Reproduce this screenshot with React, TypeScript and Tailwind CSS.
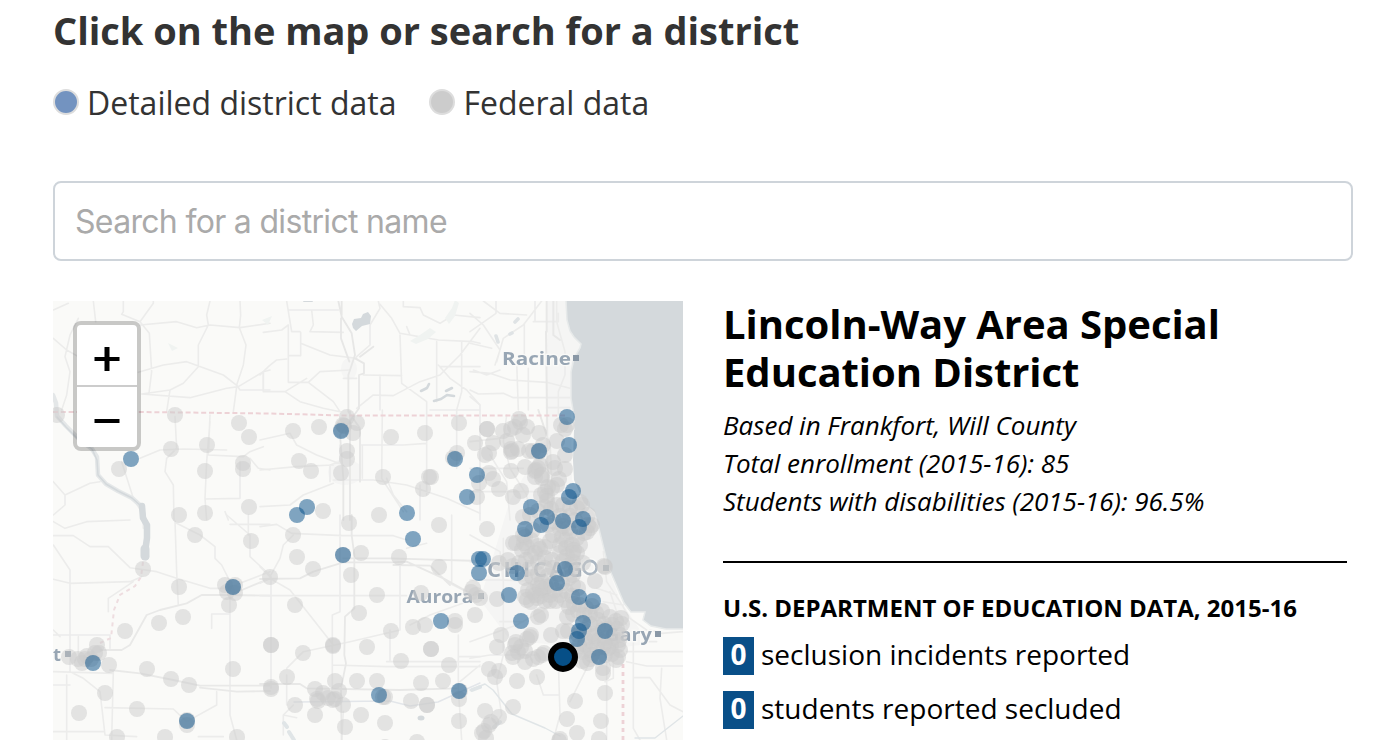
import React from "react";

type Point = [number, number];

const parse = (s: string): Point[] =>
  s.trim().split(/\s+/).map((p) => p.split(",").map(Number) as Point);

// Districts covered by federal data only
const federal = parse(`
57,415 175,415 239,423 249,437 207,445 171,449 243,463 243,469 205,471 119,469 249,507 179,515 205,513
293,431 319,427 347,417 357,423 353,433 343,425 344,426 341,430 347,451 347,459 341,473 299,461 311,471 391,437
425,433 459,423 475,443 457,453 453,458 383,477 429,477 431,477 423,489 323,511 349,523 379,515 439,525
479,483 477,497 485,455
487,429 487,429 493,443 503,431 519,419 511,429 515,427 520,422 527,427 523,435 507,441 539,433 511,449
512,451 511,452 518,449 489,453 543,445 557,441 561,425 565,429 567,425 529,451 533,451 539,451 539,452 565,455
489,473 493,479 511,471 525,467 499,489 513,497 521,491 535,477 538,468 535,471 540,465 542,478 553,462 555,468
559,479 565,469 548,487 552,488 541,495 545,492 547,496 557,485 547,501 557,505 563,505 570,508 577,508
582,505 580,502 588,515 523,517 530,515 538,511 551,509 545,507 536,470 542,475
487,529 513,543 516,543 525,537 527,547 531,540 522,550 524,543 545,547 540,549 535,553 538,546 531,556 526,560
523,535 533,530 548,525 555,522 560,529 563,526 568,528 562,537 566,540 570,532 560,545 566,548 572,545 560,553
567,556 573,553 563,561 570,565 573,562 580,545 577,538 587,532 592,525 588,525 584,533 590,528 577,553 575,520
570,516 560,516 553,535 550,541 574,550 499,563 508,560 513,566 519,563 525,578 530,568 538,562 545,558 552,560
545,568 553,568 558,574 548,576 538,574 532,577 542,582 551,585 562,583 569,578 573,575 572,568 573,585
566,591 605,567 604,566 595,581 473,588 471,592 476,595 480,598 497,599 475,615 583,563 578,588
538,585 543,590 546,587 550,595 541,596 537,598 533,592 528,590 527,600 531,602 535,595 545,601 550,601 540,588
555,590 560,595 556,601 565,600 572,596 525,597 569,607 574,604 580,605 586,608 592,606
538,617 541,615 551,635 563,631 568,631 501,635 497,647 530,637 527,639 531,635 515,645 512,653 518,652 521,647
525,651 513,657 516,642 525,662 533,659 542,655 544,653 538,657 489,669 499,671 495,677 517,681 537,677 575,701
605,693 603,673 603,668 587,663 590,659 513,707 485,711 499,717 489,725 491,722 482,733 484,731 486,738 567,719
577,733 601,721 599,739 559,741 560,739 567,617 573,614 578,611 584,615 590,615 596,613 602,611 598,620 590,624
584,630 578,635 592,634 598,628 604,624 610,617 616,621 621,618 622,624 617,629 620,635 613,638 606,638 599,640
592,642 585,645 590,650 597,648 604,647 611,646 618,645 620,650 612,654 605,655 598,657 618,657 616,660 608,648
603,630 608,629 612,625 585,638 579,646 583,652 576,651 592,655 582,661 595,636 605,642 619,640
195,535 251,541 143,569 179,587 225,585 233,587 235,585 227,592 235,593 229,605 270,577 183,617 159,623 125,631
97,645 99,653 69,657 78,659 82,663 87,656 91,659 95,653 85,659 109,665 147,669 233,669 171,679 189,685 271,645
271,645 271,687 271,689 105,693 79,713 137,709 117,737 165,737 187,725 187,720 237,737 293,535 297,557 313,569
361,553 399,557 439,567 351,575 377,595 421,593 295,605 359,613 391,631 413,627 425,625 455,621 455,625
333,645 333,646 303,653 367,647 431,649 431,649 401,661 449,665 287,677 335,681 315,689 339,691 323,693 317,699
318,701 328,698 335,699 333,700 343,705 295,705 315,715 357,681 377,681 383,697 385,697 421,683 443,681 411,701
427,705 427,705 459,699 460,691 361,715 385,723 345,727 459,721 417,742 385,747 343,555
`);

// Districts with detailed records
const detailed = parse(`
131,459 341,431 455,459 307,507 297,515 407,513 477,475 467,497 567,417 569,445 539,451 573,491 569,497 531,507
547,517 563,521 583,519 525,529 541,525 579,527 479,559 483,559 479,573 517,573 509,595 565,569 557,583 579,597
593,601 521,621 583,623 579,631 577,639 605,631 599,657 233,587 93,663 187,721 343,555 413,539 441,621 379,695
459,691
`);

const roadsNW =
  "M130 18L137 80 M220 18V50L215 58L270 80L310 25V18 M270 80L298 115L305 230L297 295 M270 90L380 80L440 98L480 90L570 98L660 85 M480 18L470 60L475 90L445 150V215L400 265L360 285L275 297 M570 18L572 60L568 98L588 150L580 210L560 270L570 285L660 285 M265 232L340 210L410 200L520 240L565 275L640 230L660 225 M640 230V285 M560 275L550 350 M275 297L420 308L530 280L565 275 M360 285L350 350 M10 130L50 165L85 185 M10 45L55 25 M85 70L60 120L45 185L60 230L50 300L35 345 M375 365L380 460 M270 490L330 465L400 462L530 465 M380 460L350 490L345 530L370 570L372 675 M480 380L470 500L465 610L470 675 M480 360L475 480L580 485L600 470L640 455 M600 490L625 520L660 525 M570 500V610L465 612 M215 500L250 610L280 660 M45 600L120 565L150 560 M10 660L45 630V600 M10 560L45 600 M525 650L535 675";
const roadsN =
  "M80 18L95 110L120 110 M85 45L235 45 M155 45L160 90L150 110L250 112 M10 112L65 105L85 90V260 M85 182H122V112 M85 262H145L180 230L270 225 M122 145L210 180L290 190 M0 240L25 215L50 195L80 192 M10 235V290L75 290L140 250 M75 290L120 320L190 340L240 350 M145 262L220 320L240 350 M355 18L360 40L330 90V150L290 185 M250 250H290 M360 28L395 70L420 115L535 135L640 140L660 145 M420 120L425 265L500 320V600 M360 240V345 M310 240L425 242 M290 340L340 300L400 302L480 260L540 240L600 180L660 100 M530 140V320 M535 210L570 250L620 285L660 330 M540 215H660 M605 140V290L590 345V520 M510 345H660 M430 18V35L480 38L490 60L540 85L580 60L660 68 M440 95L450 120L500 130 M0 435L90 415 M90 415L110 450L170 480L250 510 M0 525L110 515L220 510 M305 450H430L500 445 M307 450V550 M367 345L365 550L430 650 M380 550L400 600L440 650 M0 635L90 630L130 600L220 565 M220 555H340L440 570L560 610L660 655 M480 570V675 M240 450V500L210 510V560";
const highwaysN =
  "M235 18L245 65L275 115L285 180L265 240V350L300 400V560 M245 18V60 M243 70V130L268 200 M285 190L312 205V235L297 240V340L240 420L250 550V675 M270 350V675 M300 185L340 155";
const roadsNE =
  "M78 18V55L0 110 M0 55L40 90L90 165L75 210 M0 145L65 160 M40 18L90 55L170 60 M215 18L160 90L100 130L80 200 M163 85V210 M190 80H265V55 M175 220V345 M140 200L145 345 M0 230L60 235L120 255L230 262L300 280 M0 285L25 297L100 295L130 308H300 M0 305L30 330V360 M260 18V80L285 170V240L265 290V360 M230 338H300 M195 18V80 M90 225L50 240L10 225 M110 360L100 440L120 520L170 600L180 675 M0 440L90 430 M0 520H160 M30 360V675 M0 590H240 M60 480L110 560L120 675";
const highwaysNE = "M230 18V110 M228 110L235 675 M250 18V120L270 135 M205 345L240 450L250 675";
const roadsSW =
  "M10 20L45 40L110 20L240 15 M10 62H70L120 95H175L240 158L320 170L380 190L480 220H530L660 170 M10 90L60 165V360 M10 193L60 205L240 200L275 185 M375 18L380 170L385 270 M380 25L450 60L495 95V130L515 150L540 200 M530 0L600 60V125L660 180 M595 0V60 M485 340V297H540 M540 220V600L560 675 M10 360H180V400 M10 345L30 365 M60 360V470L100 490L150 530L165 660 M165 578L370 582L410 620L500 570V530 M165 660L260 665 M445 665H520 M190 470L185 675 M50 480V675 M10 510H60 M10 650H160 M540 28H660 M10 470L190 475 M280 0V40 M175 290V250L250 200 M85 365V420";
const highwaysSW =
  "M150 405H215L240 390L290 300L330 285L410 265L455 240L540 240L660 190 M180 465L270 475L370 495L450 512H660 M450 518L560 530L660 528 M540 240L660 242";
const roadsS =
  "M0 35L50 28L95 55L250 62H400L440 75 M0 155L30 185L60 130L70 90L100 60 M33 185V520 M0 205L30 190L90 225 M0 242H440 M90 225L220 390 M240 0V290L217 300V520 M420 150V345L270 380L130 410L80 460 M217 450L380 455H660 M380 440L660 440 M575 0V200 M595 360V520L605 675 M595 425H660 M100 570L70 600V660 M80 480V570 M250 590L245 675 M450 330L510 300L650 250 M560 200L620 230 M390 345V440 M480 440L590 440 M70 600L110 608 M440 100L500 85 M600 500L660 450";
const highwaysS =
  "M0 192L120 190L160 170L250 142L400 142L440 140L550 190L640 240 M275 0V60L283 120V280L255 305L253 420L258 445L243 520L245 675 M0 507H120L140 520L420 525L590 520 M400 150L510 152L570 210 M250 130H390L660 138";
const roadsSE =
  "M0 60L90 110L100 200 M0 195H90L230 200 M100 70V420L80 500L95 600L70 640 M0 430L60 420L200 420 M90 320H160 M0 380L140 330L230 280 M0 140L60 150 M265 440L270 600L250 675 M300 560L330 500L360 440 M410 380V675 M430 440V490L405 500 M200 480L220 540H265 M490 360V640L510 675 M470 440L530 453H639 M490 488H540L600 570L639 590 M575 460L570 550L590 675 M470 410H639 M540 345L575 355L639 350 M520 380H560 M400 110L410 200L450 260L480 310L530 345 M395 170H420 M420 230L440 290L470 330 M380 220L440 240 M400 260L460 270";

const waterColor = "#d4d9dc";

function Basemap() {
  return (
    <g>
      <rect x="50" y="298" width="636" height="445" fill="#fafaf8" />
      <g fill="#f5f5f4">
        <path d="M548 301H576L590 345L575 365L571 420L572 480L598 520L605 560L620 600L640 630L640 645L600 650L510 640L480 600L510 500L545 440Z" />
        <ellipse cx="345" cy="472" rx="17" ry="13" />
        <ellipse cx="349" cy="369" rx="8" ry="11" />
      </g>
      <path
        d="M566 298L567 320L570 331L574 337L581 344L580 348L574 358L571 372L571 398L574 416L574 430L573 460L574 480L584 503L595 512L598 525L602 541L608 566L615 582L624 603L631 612L645 612L643 620L651 626L666 629L686 629V298Z"
        fill={waterColor}
      />
      <path
        d="M566 301L567 320L570 331L574 337L581 344L580 348L574 358L571 372L571 398L574 416L574 430M598 525L602 541L608 566L615 582L624 603L631 612L645 612L643 620L651 626L666 629L683 629"
        fill="none"
        stroke="#e7eaea"
        strokeWidth="1.5"
      />
      <g fill="none" stroke="#ececeb" strokeLinejoin="round" strokeLinecap="round">
        <g transform="translate(50 295) scale(.33333)" strokeWidth="4.8">
          <path d={roadsNW} />
        </g>
        <g transform="translate(260 295) scale(.33333)" strokeWidth="4.8">
          <path d={roadsN} />
          <path d={highwaysN} stroke="#e7e7e6" strokeWidth="5.5" />
        </g>
        <g transform="translate(470 295) scale(.33333)" strokeWidth="4.8">
          <path d={roadsNE} />
          <path d={highwaysNE} stroke="#e8e8e7" strokeWidth="6" />
        </g>
        <g transform="translate(50 515) scale(.33333)" strokeWidth="4.8">
          <path d={roadsSW} />
          <path d={highwaysSW} stroke="#e9e9e8" strokeWidth="5.5" />
        </g>
        <g transform="translate(260 515) scale(.33333)" strokeWidth="4.8">
          <path d={roadsS} />
          <path d={highwaysS} stroke="#e8e8e7" strokeWidth="5.5" />
        </g>
        <g transform="translate(470 515) scale(.33333)" strokeWidth="4.8">
          <path d={roadsSE} />
        </g>
      </g>
      <g fill="none" stroke={waterColor} strokeLinecap="round" strokeLinejoin="round">
        <path d="M53 395L56 403L57 416L66 426L80 440L92 449L97 457L98 475L106 484L118 491L132 498L141 506L144 518" strokeWidth="4.5" stroke="#e4e7e8" />
        <path d="M57 417L66 427L80 441L92 449L97 460L98 475L106 484L118 491L132 498L141 506" strokeWidth="1.5" />
        <path d="M142 506L143 518L147 525L147 538L145 552L146 557" strokeWidth="6.5" />
        <path d="M145 549V556" strokeWidth="9" />
        <path d="M294 702L390 701L410 706L438 702L460 692L480 683" strokeWidth="1.4" stroke="#e3e6ea" />
        <path d="M470 690L485 684L493 690L512 714L545 728L560 736M635 738H655L683 716" strokeWidth="1.4" stroke="#e0e5e7" />
        <path d="M284 723L287 727M289 732L294 740M472 690L480 687M494 727L500 722" strokeWidth="4" stroke="#e0e5e7" />
        <path d="M421 391L427 388L429 384M434 401L441 399L447 395L454 396M446 391L452 388" strokeWidth="2.6" />
        <path d="M515 322L518 319M510 334L512 333M496 336L498 342" strokeWidth="3.6" stroke="#dfe3e5" />
        <path d="M304 301H312" strokeWidth="2" />
      </g>
      <path d="M352 324L354 319L361 318L363 314L368 312L371 316L370 324L362 326L356 331L353 328Z" fill={waterColor} />
      <ellipse cx="421" cy="718" rx="3.5" ry="2.5" fill={waterColor} />
      <g fill="#f0f3f1">
        <path d="M410 341L420 335L430 328L436 332L428 339L416 344Z M445 318L452 308L455 300L459 303L455 316L449 324Z M168 343L178 348L172 351Z M262 320L272 316L268 325Z" />
      </g>
      <g fill="none" stroke="#edd2d6" strokeWidth="2" strokeDasharray="5 2.8">
        <path d="M53 412H140L270 413.5L345 415.5H567" />
        <path d="M143 562L141 577L135 586L120 595L114 610L111 638L100 643" strokeDasharray="4 4" stroke="#eedde0" />
        <path d="M623 664V740" strokeWidth="2.8" strokeDasharray="4 4" />
      </g>
    </g>
  );
}

function CityLabels() {
  return (
    <g
      fill="#98a6b4"
      stroke="#fafaf8"
      strokeWidth="2.5"
      paintOrder="stroke"
      className="font-['Open_Sans',sans-serif] font-bold"
    >
      <text x="502" y="365" fontSize="18.5" textLength="69" lengthAdjust="spacingAndGlyphs">Racine</text>
      <text x="406.5" y="603" fontSize="18.5" textLength="67" lengthAdjust="spacingAndGlyphs">Aurora</text>
      <text x="487" y="577" fontSize="22" textLength="96" lengthAdjust="spacing">CHICAG</text>
      <text x="605" y="641" fontSize="18.5" textLength="47" lengthAdjust="spacingAndGlyphs">Gary</text>
      <text x="53" y="661" fontSize="18.5" textLength="8" lengthAdjust="spacingAndGlyphs">t</text>
      <circle cx="590" cy="567.5" r="6.6" fill="none" stroke="#fafaf8" strokeWidth="6" />
      <circle cx="590" cy="567.5" r="6.6" fill="none" stroke="#a9b5c1" strokeWidth="2.6" />
      <path stroke="none" fill="#8a98a6" d="M573 355h6v6h-6z M603 565h6v6h-6z M655 631h6v6h-6z M65 651h6v6h-6z M478 593h6v6h-6z" />
    </g>
  );
}

function DistrictMap() {
  return (
    <div className="relative h-[439px] w-[630px] shrink-0 overflow-hidden bg-[#fafaf8]">
      <svg viewBox="53 301 630 439" className="block h-full w-full">
        <g className="blur-[0.6px]">
          <Basemap />
          <CityLabels />
        </g>
        <g fill="#cbcbcb" fillOpacity="0.5">
          {federal.map(([x, y], i) => (
            <circle key={i} cx={x} cy={y} r="8" />
          ))}
        </g>
        <g fill="#044d88" fillOpacity="0.5">
          {detailed.map(([x, y], i) => (
            <circle key={i} cx={x} cy={y} r="8" />
          ))}
        </g>
        <circle cx="563" cy="657" r="12" fill="#064f87" stroke="#000" strokeWidth="6" />
      </svg>
      <div className="absolute top-5 left-5 flex w-[68px] flex-col rounded-lg border-4 border-black/20 bg-white bg-clip-padding">
        <button aria-label="Zoom in" className="flex h-[62px] items-center justify-center border-b-2 border-[#ccc] pt-2">
          <svg viewBox="0 0 26 24" className="h-6 w-[26px]">
            <path d="M0.5 10h25v4H0.5z M10.5 0h5v24h-5z" />
          </svg>
        </button>
        <button aria-label="Zoom out" className="flex h-[60px] items-center justify-center pt-2">
          <svg viewBox="0 0 26 24" className="h-6 w-[26px]">
            <path d="M0.5 10h25v4H0.5z" />
          </svg>
        </button>
      </div>
    </div>
  );
}

function LegendItem({ label, dot }: { label: string; dot: string }) {
  return (
    <div className="flex items-start">
      <span className={`mt-[8px] mr-[8px] h-[26px] w-[26px] rounded-full border-2 border-[#ddd] ${dot}`} />
      <span>{label}</span>
    </div>
  );
}

function Stat({ value, label }: { value: string; label: string }) {
  return (
    <li className="flex h-[38px] text-[28px] leading-[34px]">
      <span className="flex w-[31px] justify-center bg-[#094f88] font-bold text-white">{value}</span>
      <span className="ml-[7px]">{label}</span>
    </li>
  );
}

export default function App() {
  return (
    <main className="h-[740px] w-[1400px] overflow-hidden bg-white pt-[6px] pl-[53px] font-['Open_Sans','Noto_Sans',sans-serif] text-[#333]">
      <h2 className="text-[38px] leading-[48px] font-bold tracking-[-0.03px]">Click on the map or search for a district</h2>
      <div className="mt-[27px] flex h-[44px] gap-[33px] text-[32px] leading-[44px]">
        <LegendItem label="Detailed district data" dot="bg-[#7393c0]" />
        <LegendItem label="Federal data" dot="bg-[#ccc]" />
      </div>
      <input
        type="text"
        placeholder="Search for a district name"
        className="mt-[56px] block h-[80px] w-[1300px] rounded-lg border-2 border-[#ced4da] px-5 font-['Inter',sans-serif] text-[32px] tracking-[-0.68px] placeholder:text-[#aaa]"
      />
      <div className="mt-10 flex gap-10 text-black">
        <DistrictMap />
        <section className="-mt-px w-[624px]">
          <h3 className="w-[560px] text-[40px] leading-[48px] font-bold tracking-[-0.04px]">
            Lincoln-Way Area Special Education District
          </h3>
          <div className="mt-[10px] text-[26px] leading-[38px] tracking-[-0.02px] italic">
            <p>Based in Frankfort, Will County</p>
            <p>Total enrollment (2015-16): 85</p>
            <p>Students with disabilities (2015-16): 96.5%</p>
          </div>
          <hr className="mt-[41px] border-t-2 border-black" />
          <h4 className="mt-[29px] text-[24px] leading-[32px] font-bold">U.S. DEPARTMENT OF EDUCATION DATA, 2015-16</h4>
          <ul className="mt-[13px] flex flex-col gap-4">
            <Stat value="0" label="seclusion incidents reported" />
            <Stat value="0" label="students reported secluded" />
          </ul>
        </section>
      </div>
    </main>
  );
}
